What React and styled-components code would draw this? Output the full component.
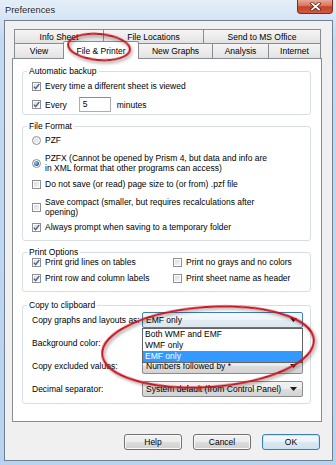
import React from 'react';
import styled, { createGlobalStyle, css } from 'styled-components';

const Global = createGlobalStyle`
  html, body { margin: 0; padding: 0; }
  body {
    width: 336px; height: 465px; overflow: hidden;
    font-family: "Liberation Sans", Arial, sans-serif;
    font-size: 8.5px; color: #000;
  }
`;

const Window = styled.div`
  position: relative;
  width: 336px; height: 465px;
  box-sizing: border-box;
  padding: 0 3px 4px 4px;
  display: flex; flex-direction: column;
  background: linear-gradient(180deg, #e4eef8 0px, #d6e5f4 18px, #c3d9f0 40px, #b9d3ee 100%);
`;

const TitleBar = styled.div`
  height: 20px; flex: none;
  display: flex; justify-content: space-between; align-items: flex-start;
`;

const Title = styled.div`
  font-size: 9.3px; line-height: 20px; padding-left: 1px;
  color: #1a1a1a;
  text-shadow: 0 0 4px #fff, 0 0 2px #fff;
`;

const CloseBtn = styled.div`
  width: 36px; height: 14px; box-sizing: border-box;
  border: 1px solid #7a2c20; border-top: none;
  border-radius: 0 0 4px 4px;
  background: linear-gradient(180deg, #e9a898 0%, #d9725d 45%, #c4412a 52%, #d35a40 100%);
  display: flex; align-items: center; justify-content: center;
`;

const Client = styled.div`
  flex: 1;
  border: 1px solid #6f8094;
  background: #f0f0f0;
  padding: 8px 10px 0 7px;
  display: flex; flex-direction: column;
`;

const TabRow = styled.div`
  display: flex; padding-left: 2px;
  height: ${p => p.$h}px;
  position: relative; z-index: ${p => p.$z};
`;

const Tab = styled.div`
  width: ${p => p.$w}px; height: 100%; flex: none;
  box-sizing: border-box;
  border: 1px solid #898c95; border-bottom: none;
  margin-right: -1px;
  background: linear-gradient(180deg, #f5f5f5, #e3e3e3);
  display: flex; align-items: center; justify-content: center;
  white-space: nowrap;
  ${p => p.$active && css`
    background: #fff;
    height: 18px; margin-top: -2px;
    position: relative; z-index: 3;
    border-radius: 2px 2px 0 0;
  `}
`;

const Panel = styled.div`
  height: 364px; box-sizing: border-box;
  border: 1px solid #898c95;
  background: #fff;
  padding: 12px 10px 0 9px;
  display: flex; flex-direction: column;
  position: relative; z-index: 0;
`;

const Group = styled.div`
  position: relative;
  height: ${p => p.$h}px; box-sizing: border-box;
  margin-top: ${p => p.$mt || 0}px;
  border: 1px solid #d5dfe5; border-radius: 3px;
  padding: ${p => p.$pt}px 0 0 9px;
  display: flex; flex-direction: column;
`;

const Legend = styled.div`
  position: absolute; top: -6px; left: 4px;
  padding: 0 2px; background: #fff;
  line-height: 10px; color: #000;
`;

const Row = styled.div`
  display: flex; align-items: center; gap: 4px;
  min-height: ${p => p.$h || 12}px;
  margin-top: ${p => p.$mt || 0}px;
  line-height: 10px;
`;

const Grid2 = styled.div`
  display: grid; grid-template-columns: 141px 1fr;
  row-gap: 4px;
`;

const Box = styled.span`
  width: 9px; height: 9px; flex: none; box-sizing: border-box;
  border: 1px solid #8e8f8f;
  background: linear-gradient(135deg, #d6d8db, #f7f7f7);
  box-shadow: inset 0 0 0 1px #fff;
  display: flex; align-items: center; justify-content: center;
  border-radius: ${p => p.$round ? '50%' : '0'};
`;

const Dot = styled.span`
  width: 5px; height: 5px; border-radius: 50%;
  background: radial-gradient(circle at 35% 35%, #9cc7f2, #2a62a8 70%);
`;

const TextInput = styled.div`
  width: 32px; height: 15px; box-sizing: border-box;
  border: 1px solid #abadb3; border-top-color: #8a8c93;
  background: #fff;
  padding-left: 3px; line-height: 13px;
  margin-left: 8px; margin-right: 2px;
`;

const FieldGrid = styled.div`
  display: grid; grid-template-columns: 110px 161px;
  grid-auto-rows: 16px; row-gap: 7px;
  align-items: center;
`;

const ComboWrap = styled.div`
  position: relative; height: 16px;
`;

const Combo = styled.div`
  height: 16px; box-sizing: border-box;
  border: 1px solid ${p => p.$focus ? '#3c7fb1' : '#8b8b8b'};
  border-radius: 2px;
  background: ${p => p.$focus
    ? 'linear-gradient(180deg, #f7fafd 0%, #eef4f9 50%, #e2ebf3 51%, #dbe6ef 100%)'
    : 'linear-gradient(180deg, #f2f2f2 0%, #ebebeb 50%, #dddddd 51%, #d3d3d3 100%)'};
  display: flex; align-items: center; justify-content: space-between;
  padding: 0 5px 0 3px;
  white-space: nowrap;
`;

const DropList = styled.div`
  position: absolute; left: 0; top: 16px; z-index: 5;
  width: 161px; box-sizing: border-box;
  border: 1px solid #646464;
  background: #fff;
  display: flex; flex-direction: column;
`;

const DropItem = styled.div`
  height: 11px; line-height: 11px; padding-left: 2px;
  background: ${p => p.$sel ? '#3399ff' : 'transparent'};
  color: ${p => p.$sel ? '#fff' : '#000'};
`;

const ButtonRow = styled.div`
  display: flex; justify-content: flex-end; gap: 11px;
  margin-top: 12px; margin-right: 2px;
`;

const Button = styled.div`
  width: 58px; height: 16px; box-sizing: border-box;
  border: 1px solid ${p => p.$def ? '#3c7fb1' : '#707070'};
  border-radius: 3px;
  background: ${p => p.$def
    ? 'linear-gradient(180deg, #f3f8fb 0%, #eaf2f8 50%, #dbe7f1 51%, #d2e1ee 100%)'
    : 'linear-gradient(180deg, #f2f2f2 0%, #ebebeb 50%, #dddddd 51%, #cfcfcf 100%)'};
  box-shadow: inset 0 0 0 1px ${p => p.$def ? '#c5e6f8' : '#fbfbfb'};
  display: flex; align-items: center; justify-content: center;
`;

const Overlay = styled.svg`
  position: absolute; left: 0; top: 0;
  width: 336px; height: 465px;
  pointer-events: none; z-index: 10;
`;

const Check = ({ on }) => (
  <Box>
    {on && (
      <svg width="7" height="7" viewBox="0 0 7 7">
        <path d="M0.8 3.6 L2.6 5.6 L6.3 0.9" fill="none" stroke="#4a5d8f" strokeWidth="1.4" />
      </svg>
    )}
  </Box>
);

const Radio = ({ on }) => <Box $round>{on && <Dot />}</Box>;

const Arrow = () => (
  <svg width="7" height="4" viewBox="0 0 7 4"><path d="M0 0 H7 L3.5 4 Z" fill="#1a1a1a" /></svg>
);

export default function App() {
  return (
    <>
      <Global />
      <Window>
        <TitleBar>
          <Title>Preferences</Title>
          <CloseBtn>
            <svg width="11" height="9" viewBox="0 0 11 9">
              <path d="M2 1.5 L9 7.5 M9 1.5 L2 7.5" stroke="#5a1a10" strokeWidth="3.2" strokeLinecap="square" />
              <path d="M2 1.5 L9 7.5 M9 1.5 L2 7.5" stroke="#fff" strokeWidth="1.8" strokeLinecap="square" />
            </svg>
          </CloseBtn>
        </TitleBar>
        <Client>
          <TabRow $h={14} $z={0}>
            <Tab $w={90}>Info Sheet</Tab>
            <Tab $w={101}>File Locations</Tab>
            <Tab $w={118}>Send to MS Office</Tab>
          </TabRow>
          <TabRow $h={15} $z={1}>
            <Tab $w={50}>View</Tab>
            <Tab $w={76} $active>File &amp; Printer</Tab>
            <Tab $w={75}>New Graphs</Tab>
            <Tab $w={57}>Analysis</Tab>
            <Tab $w={53}>Internet</Tab>
          </TabRow>
          <Panel>
            <Group $h={44} $pt={8}>
              <Legend>Automatic backup</Legend>
              <Row><Check on />Every time a different sheet is viewed</Row>
              <Row $mt={5} $h={15}><Check on />Every<TextInput>5</TextInput>minutes</Row>
            </Group>
            <Group $h={115} $pt={7} $mt={11}>
              <Legend>File Format</Legend>
              <Row><Radio />PZF</Row>
              <Row $mt={7} $h={20}><Radio on /><span>PZFX (Cannot be opened by Prism 4, but data and info are<br />in XML format that other programs can access)</span></Row>
              <Row $mt={5}><Check />Do not save (or read) page size to (or from) .pzf file</Row>
              <Row $mt={7} $h={20}><Check /><span>Save compact (smaller, but requires recalculations after<br />opening)</span></Row>
              <Row $mt={4}><Check on />Always prompt when saving to a temporary folder</Row>
            </Group>
            <Group $h={40} $pt={3} $mt={11}>
              <Legend>Print Options</Legend>
              <Grid2>
                <Row><Check on />Print grid lines on tables</Row>
                <Row><Check />Print no grays and no colors</Row>
                <Row><Check on />Print row and column labels</Row>
                <Row><Check />Print sheet name as header</Row>
              </Grid2>
            </Group>
            <Group $h={99} $pt={6} $mt={13}>
              <Legend>Copy to clipboard</Legend>
              <FieldGrid>
                <span>Copy graphs and layouts as:</span>
                <ComboWrap>
                  <Combo $focus>EMF only<Arrow /></Combo>
                  <DropList>
                    <DropItem>Both WMF and EMF</DropItem>
                    <DropItem>WMF only</DropItem>
                    <DropItem $sel>EMF only</DropItem>
                  </DropList>
                </ComboWrap>
                <span>Background color:</span>
                <ComboWrap><Combo><span /><Arrow /></Combo></ComboWrap>
                <span>Copy excluded values:</span>
                <ComboWrap><Combo>Numbers followed by *<Arrow /></Combo></ComboWrap>
                <span>Decimal separator:</span>
                <ComboWrap><Combo>System default (from Control Panel)<Arrow /></Combo></ComboWrap>
              </FieldGrid>
            </Group>
          </Panel>
          <ButtonRow>
            <Button>Help</Button>
            <Button>Cancel</Button>
            <Button $def>OK</Button>
          </ButtonRow>
        </Client>
        <Overlay viewBox="0 0 336 465">
          <defs>
            <filter id="sh" x="-20%" y="-40%" width="140%" height="180%">
              <feDropShadow dx="1.5" dy="2" stdDeviation="1.5" floodColor="#000" floodOpacity="0.4" />
            </filter>
          </defs>
          <ellipse cx="99" cy="47" rx="31" ry="13" transform="rotate(5 99 47)" fill="none" stroke="#c5141e" strokeWidth="2" filter="url(#sh)" />
          <ellipse cx="208" cy="347" rx="106" ry="40" transform="rotate(-4 208 347)" fill="none" stroke="#c5141e" strokeWidth="2" filter="url(#sh)" />
        </Overlay>
      </Window>
    </>
  );
}
